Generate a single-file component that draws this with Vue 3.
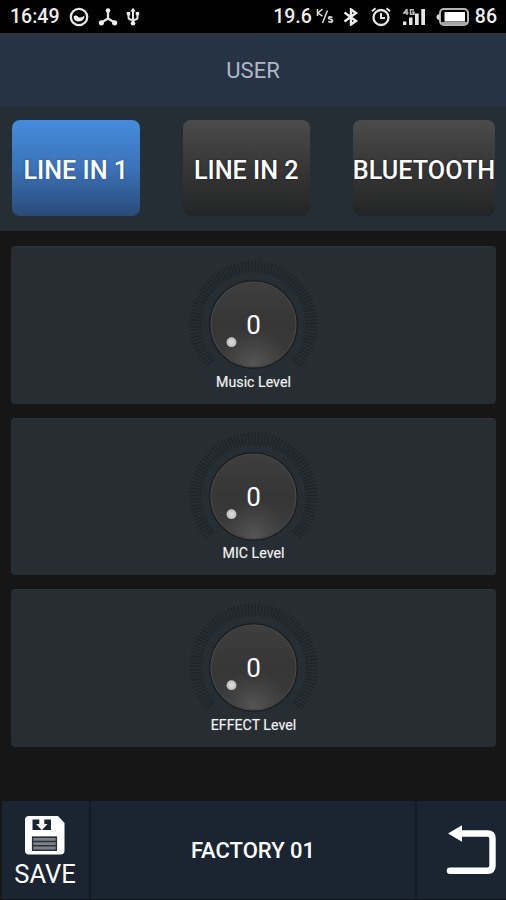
<script setup>
import { ref } from 'vue'

const sources = ['LINE IN 1', 'LINE IN 2', 'BLUETOOTH']
const active = ref('LINE IN 1')
const levels = ref([
  { label: 'Music Level', value: 0 },
  { label: 'MIC Level', value: 0 },
  { label: 'EFFECT Level', value: 0 },
])
const ticks = Array.from({ length: 82 }, (_, i) => -131 + (i * 262) / 81)
</script>

<template>
  <div class="screen">
    <div class="status">
      <span class="time">16:49</span>
      <svg class="i-face" width="20" height="20" viewBox="0 0 20 20">
        <circle cx="10" cy="10" r="8.200" fill="none" stroke="#e6e6e6" stroke-width="2.300" />
        <path d="M4.500 9.500q2.500-2 5 .5 2.500 1.500 6-1.500-.2 5.500-5.500 6-5 0-5.500-5z" fill="#eee" />
      </svg>
      <svg class="i-net" width="20" height="20" viewBox="0 0 20 20">
        <path d="M10 4v7.500L3.500 15.500M10 11.500l6.500 4" fill="none" stroke="#e6e6e6" stroke-width="2.300" />
        <circle cx="10" cy="3.500" r="2.300" fill="#eee" /><circle cx="3.400" cy="15.800" r="2.600" fill="#eee" /><circle cx="16.600" cy="15.800" r="2.600" fill="#eee" />
      </svg>
      <svg class="i-usb" width="14" height="20" viewBox="0 0 14 20">
        <path d="M7 3v14M2.500 6v4.500q0 2.300 4.500 2.500M11.500 6v4.500q0 2.300-4.500 2.500" fill="none" stroke="#e6e6e6" stroke-width="2" />
        <path d="M4.300 4.500L7 .8l2.700 3.700zM.8 5h3.400v3.200H.8zM9.800 5h3.400v3.200H9.800z" fill="#eee" />
        <circle cx="7" cy="16.200" r="2.300" fill="#eee" />
      </svg>
      <span class="grow"></span>
      <span class="speed">19.6</span>
      <svg class="i-unit" width="18" height="18" viewBox="0 0 18 18">
        <path d="M1.500 1v7M6.500 1L2 5l4.500 3.200M11.500 2.500L6.500 15" fill="none" stroke="#dcdcdc" stroke-width="1.500" />
        <path d="M16.500 9.500q-4-1.500-4 .6 0 1 2 1.300 2.200.5 2 1.700-.7 1.900-4.300.4" fill="none" stroke="#dcdcdc" stroke-width="1.600" />
      </svg>
      <svg class="i-bt" width="16" height="18" viewBox="0 0 16 18">
        <path d="M1.500 4.500l11.500 8.500L8 16.500v-15L13 5 1.500 13.500" fill="none" stroke="#eee" stroke-width="2.400" />
      </svg>
      <svg class="i-alarm" width="20" height="20" viewBox="0 0 20 20">
        <circle cx="10" cy="10.500" r="7.500" fill="none" stroke="#e6e6e6" stroke-width="2.300" />
        <path d="M10 6V11h4M1 4.200L4.500 1.200M19 4.200L15.500 1.200" fill="none" stroke="#e6e6e6" stroke-width="1.900" />
      </svg>
      <svg class="i-signal" width="24" height="18" viewBox="0 0 24 18">
        <path d="M1 13.500h3.400V17H1zM7 9.500h3.500V17H7zM13 5.500h3.700V17H13zM19.300 1H23v16h-3.700z" fill="#e6e6e6" />
        <path d="M5 1L2 5h4.500M5 1v6M12 1.800H8.500v4.500H12V4.300h-2" fill="none" stroke="#bdbdbd" stroke-width="1.500" />
      </svg>
      <svg class="i-batt" width="33" height="18" viewBox="0 0 33 18">
        <rect x="4" y="1" width="28" height="16" rx="4" fill="none" stroke="#b5b5b5" stroke-width="2" />
        <path d="M5 15.200h26" stroke="#a5a5a5" stroke-width="2.600" />
        <path d="M3.500 6Q.5 6.500.5 9t3 3z" fill="#ddd" />
        <rect x="8.500" y="4" width="20.500" height="9.500" fill="#fff" />
      </svg>
      <span class="pct">86</span>
    </div>

    <header class="title"><span>USER</span></header>

    <nav class="tabs">
      <button
        v-for="s in sources"
        :key="s"
        class="tab"
        :class="{ on: s === active, wide: s === 'BLUETOOTH' }"
        @click="active = s"
      >{{ s }}</button>
    </nav>

    <main class="panels">
      <section v-for="l in levels" :key="l.label" class="panel">
        <div class="knob">
          <svg width="134" height="112" viewBox="-66.500 -67.500 134 112">
            <defs>
              <linearGradient id="face" x1="0" y1="0" x2="0" y2="1">
                <stop offset="0" stop-color="#3e3e3e" />
                <stop offset=".5" stop-color="#363636" />
                <stop offset="1" stop-color="#3c3c3c" />
              </linearGradient>
              <radialGradient id="glow" cx=".5" cy=".96" r=".42">
                <stop offset="0" stop-color="#666" stop-opacity=".6" />
                <stop offset="1" stop-color="#555" stop-opacity="0" />
              </radialGradient>
            </defs>
            <line
              v-for="t in ticks"
              :key="t"
              x1="0" y1="-52" x2="0" y2="-64"
              :transform="`rotate(${t})`"
              stroke="#1a2227" stroke-opacity=".7" stroke-width="1.400"
            />
            <circle r="44.500" fill="#1b1e20" />
            <circle r="42.500" fill="url(#face)" stroke="#484848" stroke-width="1.200" />
            <circle r="42" fill="url(#glow)" />
            <circle cx="-22" cy="17.700" r="4.900" fill="#c4c4c4" />
            <circle cx="-22" cy="17.700" r="2.500" fill="#d8d8d8" />
          </svg>
          <span class="value">{{ l.value }}</span>
        </div>
        <div class="label">{{ l.label }}</div>
      </section>
    </main>

    <footer class="bar">
      <button class="save">
        <svg width="40" height="39" viewBox="0 0 40 39">
          <path d="M4 0h29l6.500 7v27.500q0 4-4 4H4q-4 0-4-4V4q0-4 4-4z" fill="#fff" />
          <path d="M7.500 3.500h18.500v10.500H7.500z" fill="#1b2532" />
          <path d="M14.300 3h5v5h3.200L16.800 14.200 11.100 8h3.200z" fill="#fff" />
          <path d="M7 20.500h25V35H7z" fill="#7d8287" />
          <path d="M7 21.200h25M7 25.500h25M7 29.800h25M7 34.300h25M7.600 21v13.500M31.400 21v13.500" stroke="#2a313b" stroke-width="1.400" />
        </svg>
        <span>SAVE</span>
      </button>
      <div class="preset"><span>FACTORY 01</span></div>
      <button class="back">
        <svg width="50" height="52" viewBox="0 0 50 52">
          <path d="M12 9.500h29.500q5 0 5 5v27.300q0 5-5 5H4" fill="none" stroke="#fff" stroke-width="6.400" stroke-linecap="round" />
          <path d="M2 9.500L16 1.200v16.600z" fill="#fff" />
        </svg>
      </button>
    </footer>
  </div>
</template>

<style>
body { background: #161616; }
</style>

<style scoped>
* { box-sizing: border-box; }
.screen {
  width: 506px;
  height: 900px;
  display: flex;
  flex-direction: column;
  background: #161616;
  color: #fff;
  font-family: Roboto, sans-serif;
  overflow: hidden;
}
button { border: 0; padding: 0; margin: 0; background: none; color: inherit; font: inherit; }
svg { display: block; flex: none; }
.status {
  height: 33px;
  flex: none;
  display: flex;
  align-items: center;
  padding: 0 9px 0 10px;
  background: #000;
  color: #ededed;
  font-size: 19.500px;
  font-weight: 500;
}
.time { width: 59px; }
.i-net { margin-left: 9px; }
.i-usb { margin-left: 8px; }
.grow { flex: 1; }
.speed { margin-right: 4px; }
.i-bt { margin-left: 9px; }
.i-alarm { margin-left: 12px; }
.i-signal { margin-left: 11px; }
.i-batt { margin-left: 10px; }
.pct { margin-left: 6px; }
.title {
  height: 74px;
  flex: none;
  display: flex;
  align-items: center;
  justify-content: center;
  background: linear-gradient(#2b3240, #263344 8%, #263346 94%, #26333b);
  color: #b0b8c4;
  font-size: 22px;
}
.tabs {
  height: 124px;
  flex: none;
  display: flex;
  gap: 43px;
  padding: 13px 12px 15px;
  background: #262e35;
}
.tab {
  width: 127.500px;
  flex: none;
  border-radius: 8px;
  background: linear-gradient(#4b4b4b, #383838 45%, #232425);
  font-size: 25.200px;
  font-weight: 500;
  line-height: 101px;
  white-space: nowrap;
  display: flex;
  justify-content: center;
  text-shadow: 0 0 2px #0009;
}
.tab.on {
  background: linear-gradient(#468cdd, #3b72b8 50%, #294b78);
  text-shadow: 0 0 2px #1a3a6688;
}
.tab.wide { width: 142px; }
.panels {
  flex: 1;
  display: flex;
  flex-direction: column;
  gap: 14px;
  padding: 15px 10px 0 11px;
}
.panel {
  height: 157.500px;
  flex: none;
  display: flex;
  flex-direction: column;
  align-items: center;
  border-radius: 4px;
  background: #262e34;
  border-top: 1px solid #2b3436;
  padding-top: 10px;
}
.knob { display: grid; flex: none; }
.knob > * { grid-area: 1 / 1; }
.value {
  height: 134px;
  line-height: 136px;
  margin-bottom: -22px;
  text-align: center;
  font-size: 26px;
}
.label {
  font-size: 14.200px;
  line-height: 18px;
  margin-top: 3.500px;
  color: #f1f1f1;
  text-shadow: 0 0 1px #fff6;
}
.bar {
  height: 99px;
  flex: none;
  display: flex;
  background: #1b2532;
  border-bottom: 1px solid #10141c;
  margin-left: 2px;
}
.save {
  width: 87px;
  display: flex;
  flex-direction: column;
  align-items: center;
  padding: 15px 1px 0 0;
  font-size: 25.500px;
  line-height: 29px;
}
.save span { margin-top: 5px; }
.preset {
  flex: 1;
  display: flex;
  align-items: center;
  justify-content: center;
  border: solid #141b27;
  border-width: 0 2px;
  font-size: 22px;
  font-weight: 500;
}
.back {
  width: 89px;
  display: flex;
  align-items: center;
  justify-content: flex-end;
  padding-right: 10px;
}
</style>
